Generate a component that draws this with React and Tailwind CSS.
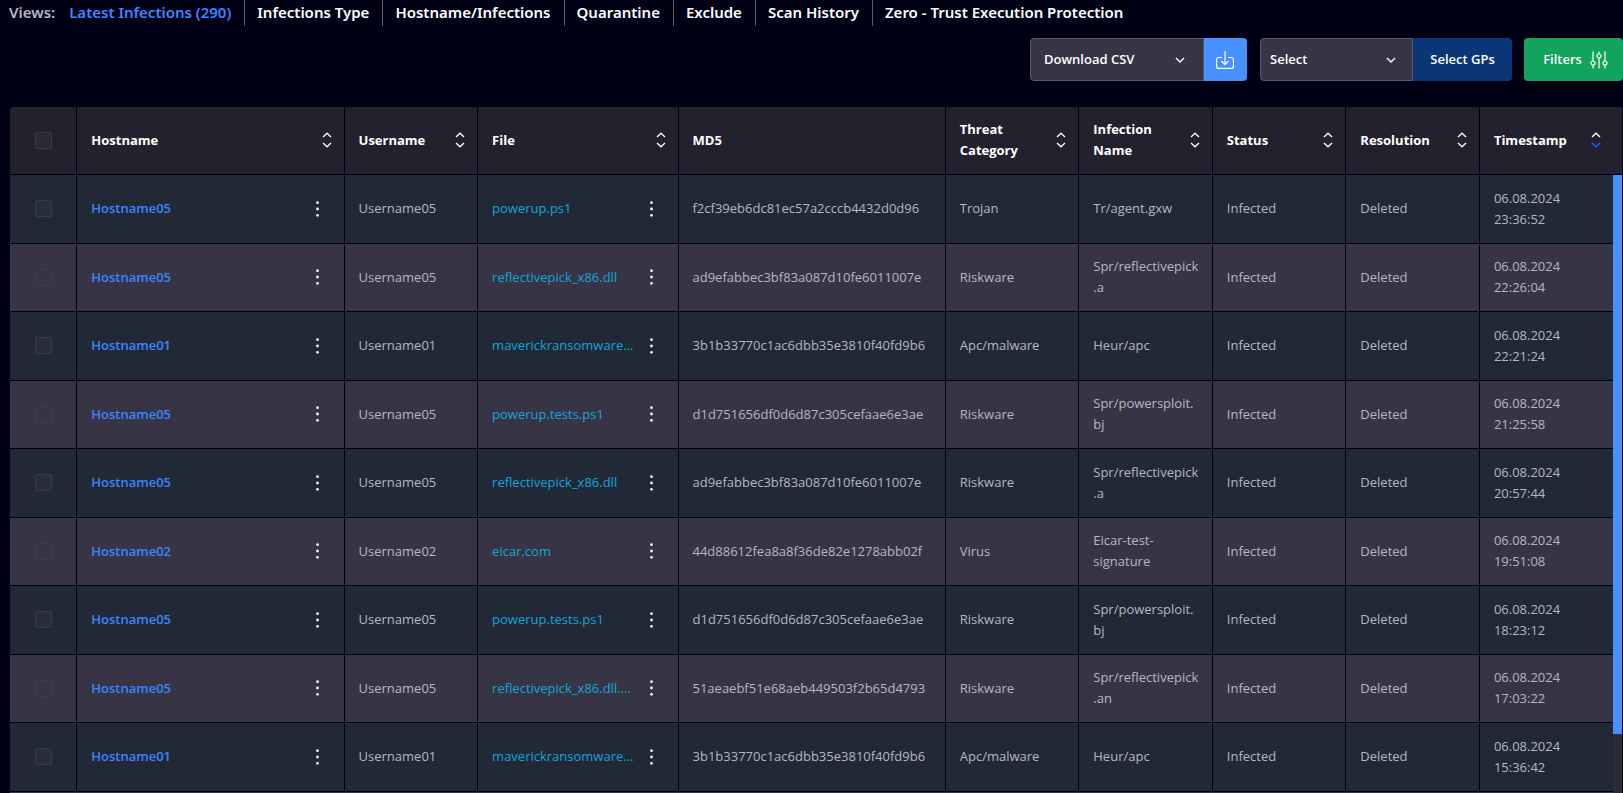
import React from 'react';

const VIEWS = [
  'Latest Infections (290)',
  'Infections Type',
  'Hostname/Infections',
  'Quarantine',
  'Exclude',
  'Scan History',
  'Zero - Trust Execution Protection',
];

const COLUMNS = [
  { label: 'Hostname', width: 'w-[16.67%]', sortable: true },
  { label: 'Username', width: 'w-[8.33%]', sortable: true },
  { label: 'File', width: 'w-[12.5%]', sortable: true },
  { label: 'MD5', width: 'w-[16.67%]', sortable: false },
  { label: 'Threat Category', width: 'w-[8.33%]', sortable: true },
  { label: 'Infection Name', width: 'w-[8.33%]', sortable: true },
  { label: 'Status', width: 'w-[8.33%]', sortable: true },
  { label: 'Resolution', width: 'w-[8.33%]', sortable: true },
  { label: 'Timestamp', width: 'w-[8.3%]', sortable: true, sorted: true },
];

const ROWS = [
  ['05', 'powerup.ps1', 'f2cf39eb6dc81ec57a2cccb4432d0d96', 'Trojan', 'Tr/agent.gxw', '23:36:52'],
  ['05', 'reflectivepick_x86.dll', 'ad9efabbec3bf83a087d10fe6011007e', 'Riskware', 'Spr/reflectivepick.a', '22:26:04'],
  ['01', 'maverickransomware...', '3b1b33770c1ac6dbb35e3810f40fd9b6', 'Apc/malware', 'Heur/apc', '22:21:24'],
  ['05', 'powerup.tests.ps1', 'd1d751656df0d6d87c305cefaae6e3ae', 'Riskware', 'Spr/powersploit.bj', '21:25:58'],
  ['05', 'reflectivepick_x86.dll', 'ad9efabbec3bf83a087d10fe6011007e', 'Riskware', 'Spr/reflectivepick.a', '20:57:44'],
  ['02', 'eicar.com', '44d88612fea8a8f36de82e1278abb02f', 'Virus', 'Eicar-test-signature', '19:51:08'],
  ['05', 'powerup.tests.ps1', 'd1d751656df0d6d87c305cefaae6e3ae', 'Riskware', 'Spr/powersploit.bj', '18:23:12'],
  ['05', 'reflectivepick_x86.dll....', '51aeaebf51e68aeb449503f2b65d4793', 'Riskware', 'Spr/reflectivepick.an', '17:03:22'],
  ['01', 'maverickransomware...', '3b1b33770c1ac6dbb35e3810f40fd9b6', 'Apc/malware', 'Heur/apc', '15:36:42'],
];

function SortIcon({ sorted }) {
  return (
    <svg className="h-4 w-[10px] shrink-0" viewBox="0 0 10 16" fill="none" strokeWidth="1.5">
      <path d="M1 5 L5 1.2 L9 5" stroke="#f4f4f6" />
      <path d="M1 11 L5 14.8 L9 11" stroke={sorted ? '#0a6cff' : '#f4f4f6'} />
    </svg>
  );
}

function Chevron() {
  return (
    <svg className="pointer-events-none h-[6px] w-[10px]" viewBox="0 0 10 6" fill="none" stroke="#f4f4f6" strokeWidth="1.5">
      <path d="M1 1 L5 5 L9 1" />
    </svg>
  );
}

function MoreButton({ label }) {
  return (
    <button type="button" aria-label={label} className="flex h-6 w-3 shrink-0 items-center justify-center">
      <svg className="h-4 w-[3px]" viewBox="0 0 3 16" fill="#f4f4f6">
        <circle cx="1.5" cy="1.7" r="1.4" />
        <circle cx="1.5" cy="8" r="1.4" />
        <circle cx="1.5" cy="14.3" r="1.4" />
      </svg>
    </button>
  );
}

function Checkbox({ label }) {
  return (
    <input
      type="checkbox"
      aria-label={label}
      className="mx-auto block h-[17px] w-[17px] appearance-none rounded-[2px] border border-[#403e4c]/80 bg-[#373545]/40"
    />
  );
}

function Dropdown({ label, text, width, padding, iconPadding }) {
  return (
    <div className={`grid ${width} items-center rounded-l-[4px] border border-[#5b5a66] bg-[#373545]`}>
      <select
        aria-label={label}
        className={`col-start-1 row-start-1 h-full w-full appearance-none bg-transparent ${padding} font-semibold text-white`}
      >
        <option>{text}</option>
      </select>
      <div className={`pointer-events-none col-start-1 row-start-1 justify-self-end ${iconPadding}`}>
        <Chevron />
      </div>
    </div>
  );
}

function Cell({ children }) {
  return <td className="border-r border-b border-[#000014] pt-0 pr-3 pb-px pl-[14px] last:border-r-0">{children}</td>;
}

export default function App() {
  return (
    <div className="flex h-screen flex-col overflow-hidden bg-[#000014] font-['Open_Sans','Noto_Sans',sans-serif] text-[13px] leading-[21px] text-[#b6b6c1]">
      <nav className="flex h-[26px] shrink-0 items-center pl-[9px] font-['Noto_Sans','Open_Sans',sans-serif] text-[15px] font-semibold">
        <span className="pr-[14px] pb-px">Views:</span>
        {VIEWS.map((view, i) => (
          <a
            key={view}
            href="#"
            className={
              i === 0
                ? 'flex h-full items-center pr-[13px] pb-px text-[#3a86ff]'
                : 'flex h-full items-center border-l border-[#5b5a66] pr-[13px] pb-px pl-3 text-white'
            }
          >
            {view}
          </a>
        ))}
      </nav>

      <div className="mt-3 flex h-[43px] shrink-0 justify-end text-[13px] font-semibold text-white">
        <Dropdown label="Download format" text="Download CSV" width="w-[174px]" padding="pl-[13px]" iconPadding="pr-[18px]" />
        <button type="button" aria-label="Download" className="flex w-[43px] items-center justify-center rounded-r-[4px] bg-[#4791ff] pr-[2px]">
          <svg className="h-[18px] w-[18px]" viewBox="0 0 18 18" fill="none" stroke="#fff" strokeWidth="1.2" strokeLinecap="round" strokeLinejoin="round">
            <path d="M5.5 6.5H2.6a2 2 0 0 0-2 2v6.9a2 2 0 0 0 2 2h12.8a2 2 0 0 0 2-2V8.5a2 2 0 0 0-2-2h-2.9M9 .6V13.5M5.9 10.5 9 13.6l3.1-3.1" />
          </svg>
        </button>
        <div className="ml-[13px] flex">
          <Dropdown label="Group policies" text="Select" width="w-[153px]" padding="pl-[9px]" iconPadding="pr-4" />
          <button type="button" className="w-[99px] rounded-r-[4px] bg-[#0a3678]">Select GPs</button>
        </div>
        <button type="button" className="ml-3 flex w-[99px] items-center justify-center gap-2 rounded-[4px] bg-[#12a35c] pl-1">
          Filters
          <svg className="h-[18px] w-[18px]" viewBox="0 0 18 18" fill="none" stroke="#fff" strokeWidth="1.2">
            <path d="M3 .5V10M3 14v3.5M9 .5V3M9 7v10.5M15 .5V10M15 14v3.5" />
            <circle cx="3" cy="12" r="2" />
            <circle cx="9" cy="5" r="2" />
            <circle cx="15" cy="12" r="2" />
          </svg>
        </button>
      </div>

      <div className="mt-[26px] mr-px ml-[10px] flex min-h-0 flex-1 overflow-hidden rounded-tl-[4px]">
        <div className="min-w-0 flex-1">
          <table className="w-full table-fixed border-separate border-spacing-0 text-left">
            <colgroup>
              <col className="w-[4.2%]" />
              {COLUMNS.map((c) => (
                <col key={c.label} className={c.width} />
              ))}
            </colgroup>
            <thead>
              <tr className="h-[68px] bg-[#23212e]">
                <th className="border-r border-b border-[#000014] p-0">
                  <Checkbox label="Select all rows" />
                </th>
                {COLUMNS.map((c) => (
                  <th key={c.label} className="border-r border-b border-[#000014] pt-0 pr-3 pb-px pl-[14px] font-bold text-white last:border-r-0">
                    {c.sortable ? (
                      <button type="button" className="flex w-full items-center justify-between text-left">
                        <span>{c.label}</span>
                        <SortIcon sorted={c.sorted} />
                      </button>
                    ) : (
                      c.label
                    )}
                  </th>
                ))}
              </tr>
            </thead>
            <tbody>
              {ROWS.map(([id, file, md5, category, name, time]) => (
                <tr key={time} className="h-[69px] bg-[#212937] even:h-[68px] even:bg-[#373545]">
                  <td className="border-r border-b border-[#000014] px-0 pt-0 pb-px">
                    <Checkbox label={`Select row ${time}`} />
                  </td>
                  <Cell>
                    <div className="flex items-center justify-between pr-2">
                      <a href="#" className="font-semibold text-[#3a86ff]">Hostname{id}</a>
                      <MoreButton label="Host actions" />
                    </div>
                  </Cell>
                  <Cell>Username{id}</Cell>
                  <Cell>
                    <div className="flex items-center justify-between pr-2">
                      <a href="#" className="whitespace-nowrap text-[#12a5d8]">{file}</a>
                      <MoreButton label="File actions" />
                    </div>
                  </Cell>
                  <Cell>{md5}</Cell>
                  <Cell>{category}</Cell>
                  <Cell><span className="block wrap-anywhere">{name}</span></Cell>
                  <Cell>Infected</Cell>
                  <Cell>Deleted</Cell>
                  <Cell>06.08.2024 {time}</Cell>
                </tr>
              ))}
              <tr className="h-[69px] bg-[#373545]">
                <td colSpan={10} />
              </tr>
            </tbody>
          </table>
        </div>
        <div className="flex w-[9px] shrink-0 flex-col">
          <div className="h-[68px] shrink-0 border-b border-[#000014] bg-[#23212e]" />
          <div className="flex-1 bg-[#2d2b38]">
            <div className="h-[90.5%] bg-[#4791ff]" />
          </div>
        </div>
      </div>
    </div>
  );
}
